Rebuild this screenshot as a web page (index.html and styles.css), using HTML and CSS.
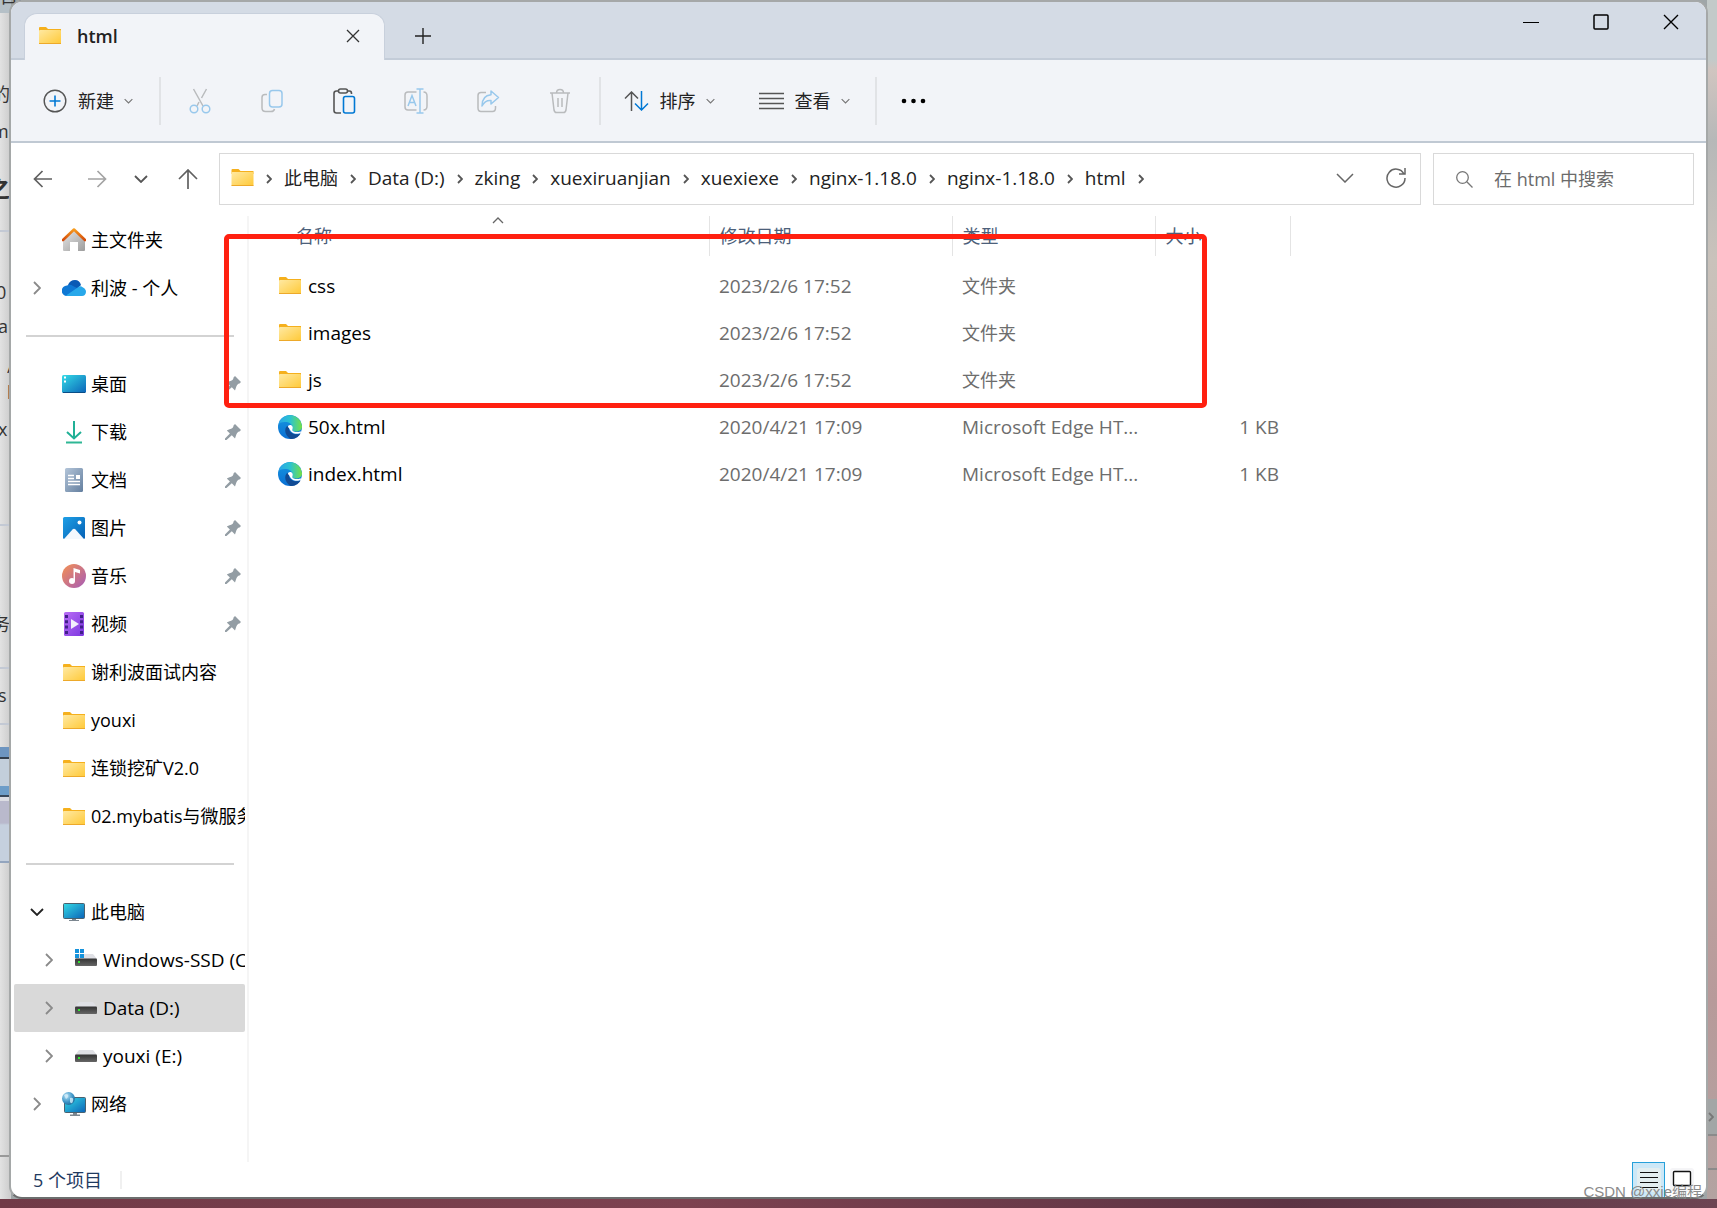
FILE: index.html
```html
<!DOCTYPE html>
<html lang="zh-CN">
<head>
<meta charset="utf-8">
<title>html</title>
<link rel="stylesheet" href="styles.css">
</head>
<body>
<svg class="defs" aria-hidden="true">
  <defs>
    <linearGradient id="gFolder" x1="0" y1="0" x2="1" y2="1"><stop offset="0" stop-color="#ffe9a2"/><stop offset="1" stop-color="#ffc937"/></linearGradient>
    <linearGradient id="gScreen" x1="0" y1="0" x2="1" y2="1"><stop offset="0" stop-color="#34dbe6"/><stop offset="1" stop-color="#0b63b8"/></linearGradient>
    <linearGradient id="gHome" x1="0" y1="0" x2="1" y2="1"><stop offset="0" stop-color="#e6e6e6"/><stop offset="1" stop-color="#9c9c9c"/></linearGradient>
    <linearGradient id="gRoof" x1="0" y1="0" x2="0" y2="1"><stop offset="0" stop-color="#f79a1c"/><stop offset="1" stop-color="#d34a0a"/></linearGradient>
    <linearGradient id="gDoc" x1="0" y1="0" x2="1" y2="1"><stop offset="0" stop-color="#b3c5d9"/><stop offset="1" stop-color="#647f9f"/></linearGradient>
    <linearGradient id="gPic" x1="0" y1="0" x2="1" y2="1"><stop offset="0" stop-color="#1e9fe6"/><stop offset="1" stop-color="#0561b5"/></linearGradient>
    <linearGradient id="gMusic" x1="0" y1="0" x2="1" y2="1"><stop offset="0" stop-color="#f59152"/><stop offset="1" stop-color="#a55bb8"/></linearGradient>
    <linearGradient id="gVideo" x1="0" y1="0" x2="1" y2="1"><stop offset="0" stop-color="#b96df5"/><stop offset="1" stop-color="#7c37e0"/></linearGradient>
    <linearGradient id="gDisk" x1="0" y1="0" x2="0" y2="1"><stop offset="0" stop-color="#333"/><stop offset="1" stop-color="#666"/></linearGradient>
    <linearGradient id="gEdgeA" x1="0" y1="0" x2="1" y2="0"><stop offset="0" stop-color="#2aa5ea"/><stop offset=".5" stop-color="#2cc3cf"/><stop offset="1" stop-color="#74e046"/></linearGradient>
    <linearGradient id="gEdgeB" x1="0" y1="0" x2="0" y2="1"><stop offset="0" stop-color="#1697e0"/><stop offset="1" stop-color="#0a6fd3"/></linearGradient>
    <radialGradient id="gGlobe" cx=".35" cy=".3" r=".8"><stop offset="0" stop-color="#b7e2f5"/><stop offset=".6" stop-color="#3b93c6"/><stop offset="1" stop-color="#1f6390"/></radialGradient>
  </defs>
  <symbol id="folder" viewBox="0 0 22 17"><path d="M0 1Q0 0 1 0H7L9 2H22V5H0z" fill="#f5b01d"/><rect y="3" width="22" height="14" rx="1" fill="url(#gFolder)"/><path d="M0 16.5H22" stroke="#eda92a"/></symbol>
  <symbol id="edge" viewBox="0 0 24 24"><circle cx="12" cy="12" r="12" fill="url(#gEdgeB)"/><path d="M.5 9A12 12 0 0 1 24 11C24.300 14.500 21.500 16.500 18 16.500C15 16.500 14 15.500 14.600 14C15.500 11.500 13 7.500 8.500 7C5 6.600 2 7.300 .5 9z" fill="url(#gEdgeA)"/><path d="M8.500 11.500C5.500 15.500 8 21 12.500 24C17.500 24.300 21 21.500 22.500 18.500C19.500 20 15.500 19.500 13 17.500C11 15.800 10.600 13.500 11.500 11z" fill="#114b94"/><path d="M14.500 11.500C13 9 9.800 9.800 10 12C11.800 13.500 12 16.500 15.500 18.200C18.500 19.300 21.500 18.800 23 17.500C23.300 16.700 23 16.300 22.400 16.400C19 17.300 13.500 17.500 14.500 14C14.800 13.200 14.900 12.500 14.500 11.500z" fill="#fff"/></symbol>
  <symbol id="chev" viewBox="0 0 8 14"><path d="M1 1L7 7L1 13" fill="none" stroke="currentColor" stroke-width="1.800"/></symbol>
  <symbol id="crumb" viewBox="0 0 6 10"><path d="M1 1L5 5L1 9" fill="none" stroke="currentColor" stroke-width="1.800"/></symbol>
  <symbol id="down" viewBox="0 0 14 8"><path d="M1 1L7 7L13 1" fill="none" stroke="currentColor" stroke-width="1.800"/></symbol>
  <symbol id="pin" viewBox="0 0 16 16"><path d="M10 0L16 6L14.500 7.500C13 7.500 11.500 9.500 11 11.500L10 14.500L6.800 11.300L1.500 16L0 16V14.500L4.900 9.400L1.800 6.500L4.500 5.300C7 5 8.500 3.500 8.500 1.500z" fill="#939da4"/></symbol>
  <symbol id="disk" viewBox="0 0 22 12"><path d="M4 0H18L22 5H0z" fill="#dfe0e5"/><rect y="4.500" width="22" height="7.500" rx="1" fill="url(#gDisk)"/><rect x="3" y="7" width="2" height="2" fill="#2ee62e"/></symbol>
  <symbol id="pc" viewBox="0 0 22 18"><rect x=".5" y=".5" width="21" height="15" rx="1" fill="url(#gScreen)" stroke="#49616f"/><path d="M9 16H13V17H16V18H6V17H9z" fill="#7c8790"/></symbol>
</svg>

<div class="desktop" aria-hidden="true">
  <p class="scrap scrap-top">目的需要网站自的心..CJUsers/Cssimages、制制nginx目录</p>
  <p class="scrap s1">的</p>
  <p class="scrap s2">m</p>
  <p class="scrap s3">之</p>
  <p class="scrap s4">0</p>
  <p class="scrap s5">ar</p>
  <p class="scrap s6">/</p>
  <p class="scrap s7">l</p>
  <p class="scrap s8">x</p>
  <p class="scrap s9">务</p>
  <p class="scrap s10">s</p>
  <span class="scroll-end"><svg width="6" height="10"><use href="#crumb"/></svg></span>
</div>

<div class="window">
  <header class="titlebar">
    <div class="tab">
      <svg width="22" height="17"><use href="#folder"/></svg>
      <span class="tab-name">html</span>
      <button class="plain" aria-label="关闭标签页"><svg width="14" height="14" viewBox="0 0 14 14"><path d="M1 1L13 13M13 1L1 13" stroke="#333" stroke-width="1.300"/></svg></button>
    </div>
    <button class="plain new-tab" aria-label="新标签页"><svg width="16" height="16" viewBox="0 0 16 16"><path d="M8 0V16M0 8H16" stroke="#222" stroke-width="1.400"/></svg></button>
    <div class="win-controls">
      <button class="plain" aria-label="最小化"><svg width="16" height="16"><path d="M0 8.500H16" stroke="#000"/></svg></button>
      <button class="plain" aria-label="最大化"><svg width="16" height="16"><rect x="1" y="1" width="14" height="14" rx="1" fill="none" stroke="#000" stroke-width="1.500"/></svg></button>
      <button class="plain" aria-label="关闭"><svg width="16" height="16"><path d="M1 1L15 15M15 1L1 15" stroke="#000" stroke-width="1.400"/></svg></button>
    </div>
  </header>

  <div class="toolbar">
    <button class="tool new"><svg width="24" height="24" viewBox="0 0 24 24" fill="none"><circle cx="12" cy="12" r="10.800" stroke="#555" stroke-width="1.400"/><path d="M12 6.500V17.500M6.500 12H17.500" stroke="#0078d4" stroke-width="1.600"/></svg>新建<svg class="dd" width="9" height="6"><use href="#down"/></svg></button>
    <span class="sep"></span>
    <div class="icons">
      <button class="plain" aria-label="剪切"><svg width="24" height="26" viewBox="0 0 24 26" fill="none" stroke-width="1.500"><path d="M5.500 1L15 18M18.500 1L13.500 10M11 14L9 18" stroke="#b9bbbd"/><circle cx="6" cy="21" r="3.800" stroke="#98c8ec"/><circle cx="18" cy="21" r="3.800" stroke="#98c8ec"/></svg></button>
      <button class="plain" aria-label="复制"><svg width="24" height="26" viewBox="0 0 24 26" fill="none" stroke-width="1.500"><path d="M7 6.500H5Q2 6.500 2 9.500V20Q2 23.500 5.500 23.500H11Q14 23.500 14.500 21" stroke="#b9bbbd"/><rect x="9.500" y="2.500" width="12.500" height="16.500" rx="3" stroke="#98c8ec"/></svg></button>
      <button class="plain" aria-label="粘贴"><svg width="24" height="26" viewBox="0 0 24 26" fill="none" stroke-width="1.600"><path d="M9 25H4.500Q2 25 2 22.500V5.500Q2 3 4.500 3H6.500M15.500 3H17.500Q19.500 3 19.500 5.500V6" stroke="#555"/><rect x="6.500" y="1" width="9" height="4" rx="2" stroke="#555"/><rect x="11.500" y="8.500" width="11" height="16.500" rx="2" stroke="#0078d4"/></svg></button>
      <button class="plain" aria-label="重命名"><svg width="24" height="26" viewBox="0 0 24 26" fill="none" stroke-width="1.500"><path d="M12.500 4H4Q1 4 1 7V19Q1 22 4 22H12.500M19.500 4Q23 4 23 8V18Q23 22 19.500 22" stroke="#b9bbbd"/><path d="M12.500 1H19.500M12.500 25H19.500M16 1V25M4 18L8 7.500L12 18M5.500 14.500H10.500" stroke="#98c8ec"/></svg></button>
      <button class="plain" aria-label="共享"><svg width="24" height="26" viewBox="0 0 24 26" fill="none" stroke-width="1.500"><path d="M10 4.500H5Q2 4.500 2 7.500V20Q2 23.500 5 23.500H16.500Q19.500 23.500 19.500 20V18" stroke="#b9bbbd"/><path d="M15 3L22.500 9.500L15 16V12.500Q9 12 6 18Q6 7.500 15 6.800z" stroke="#98c8ec" stroke-linejoin="round"/></svg></button>
      <button class="plain" aria-label="删除"><svg width="24" height="26" viewBox="0 0 24 26" fill="none" stroke="#b9bbbd" stroke-width="1.500"><path d="M2 5H22M4 5L6 22Q6.500 24.500 8.500 24.500H15.500Q17.500 24.500 18 22L20 5M8.500 5Q8.500 1.500 12 1.500T15.500 5M10 10V19M14 10V19"/></svg></button>
    </div>
    <span class="sep"></span>
    <button class="tool sort"><svg width="25" height="20" viewBox="0 0 25 20" fill="none" stroke-width="1.500"><path d="M7.500 20V1M1 7.500L7.500 1L14 7.500" stroke="#555"/><path d="M17.500 0V19M11 12.500L17.500 19L24 12.500" stroke="#0078d4"/></svg>排序<svg class="dd" width="9" height="6"><use href="#down"/></svg></button>
    <button class="tool view"><svg width="25" height="18"><path d="M0 1.500H25M0 6.500H25M0 11.500H25M0 16.500H25" stroke="#555" stroke-width="1.500"/></svg>查看<svg class="dd" width="9" height="6"><use href="#down"/></svg></button>
    <span class="sep"></span>
    <button class="plain more" aria-label="查看更多"><svg width="25" height="6"><circle cx="3" cy="3" r="2.300"/><circle cx="12.500" cy="3" r="2.300"/><circle cx="22" cy="3" r="2.300"/></svg></button>
  </div>

  <div class="navbar">
    <div class="history">
      <button class="plain back" aria-label="后退"><svg width="20" height="20" viewBox="0 0 20 20" fill="none" stroke="#606060" stroke-width="1.700"><path d="M19 10H2M9.500 2L1.500 10L9.500 18"/></svg></button>
      <button class="plain forward" aria-label="前进"><svg width="20" height="20" viewBox="0 0 20 20" fill="none" stroke="#a3a3a3" stroke-width="1.700"><path d="M1 10H18M10.500 2L18.500 10L10.500 18"/></svg></button>
      <button class="plain recent" aria-label="最近浏览的位置"><svg width="14" height="8"><use href="#down"/></svg></button>
      <button class="plain up" aria-label="上移"><svg width="20" height="20" viewBox="0 0 20 20" fill="none" stroke="#606060" stroke-width="1.700"><path d="M10 20V2M1 10L10 1L19 10"/></svg></button>
    </div>
    <nav class="address" aria-label="地址">
      <svg width="23" height="17"><use href="#folder"/></svg>
      <svg class="arrow" width="6" height="10"><use href="#crumb"/></svg><a href="#" class="cjk">此电脑</a>
      <svg class="arrow" width="6" height="10"><use href="#crumb"/></svg><a href="#">Data (D:)</a>
      <svg class="arrow" width="6" height="10"><use href="#crumb"/></svg><a href="#">zking</a>
      <svg class="arrow" width="6" height="10"><use href="#crumb"/></svg><a href="#">xuexiruanjian</a>
      <svg class="arrow" width="6" height="10"><use href="#crumb"/></svg><a href="#">xuexiexe</a>
      <svg class="arrow" width="6" height="10"><use href="#crumb"/></svg><a href="#">nginx-1.18.0</a>
      <svg class="arrow" width="6" height="10"><use href="#crumb"/></svg><a href="#">nginx-1.18.0</a>
      <svg class="arrow" width="6" height="10"><use href="#crumb"/></svg><a href="#">html</a>
      <svg class="arrow" width="6" height="10"><use href="#crumb"/></svg>
      <div class="address-tools">
        <button class="plain" aria-label="以前的位置"><svg width="18" height="10" viewBox="0 0 18 10" fill="none"><path d="M1 1L9 9L17 1" stroke="#666" stroke-width="1.500"/></svg></button>
        <button class="plain" aria-label="刷新"><svg width="20" height="20" viewBox="0 0 20 20" fill="none" stroke="#666" stroke-width="1.500"><path d="M18 6A9 9 0 1 0 19 10M19 0V6H13"/></svg></button>
      </div>
    </nav>
    <label class="search">
      <svg width="17" height="17" viewBox="0 0 17 17" fill="none" stroke="#777" stroke-width="1.300"><circle cx="6.500" cy="6.500" r="5.800"/><path d="M10.800 10.800L16.500 16.500"/></svg>
      <input type="text" placeholder="在 html 中搜索" aria-label="在 html 中搜索">
    </label>
  </div>

  <div class="body">
    <aside class="sidebar">
      <a href="#" class="item"><span class="exp"></span><svg width="24" height="24" viewBox="0 0 24 24"><path d="M1 12L12 3L23 12V22Q23 23 22 23H16V14H8V23H2Q1 23 1 22z" fill="url(#gHome)"/><path d="M1 12L12 1.500L23 12" fill="none" stroke="url(#gRoof)" stroke-width="2.600" stroke-linecap="round" stroke-linejoin="round"/></svg>主文件夹</a>
      <a href="#" class="item"><span class="exp"><svg width="8" height="14"><use href="#chev"/></svg></span><svg width="24" height="24" viewBox="0 0 24 24"><path d="M6 9Q8 4 13 4Q17.500 4 19 9L13 15z" fill="#0a5ab5"/><path d="M5 20A5 5 0 0 1 5 9.500Q8 8 11 10L17 13L9 20z" fill="#0f78d4"/><path d="M4 19.500L15 12Q18 9 21 11.500Q24 13 24 16Q23.500 20 20 20H5z" fill="#28a8ea"/></svg>利波 - 个人</a>
      <hr>
      <a href="#" class="item"><span class="exp"></span><svg width="24" height="24" viewBox="0 0 24 24"><rect y="3" width="24" height="18" rx="1.500" fill="url(#gScreen)"/><path d="M2 5.500H4M2 9.500H4" stroke="#fff" stroke-width="2"/><path d="M1 20.500H23" stroke="#0a4d86"/></svg>桌面<svg class="pin" width="16" height="16"><use href="#pin"/></svg></a>
      <a href="#" class="item"><span class="exp"></span><svg width="24" height="24" viewBox="0 0 24 24" fill="none"><path d="M12 1V18M5 12L12 18.500L19 12" stroke="#20b096" stroke-width="2"/><path d="M4 22.500H20" stroke="#2fb795" stroke-width="2"/></svg>下载<svg class="pin" width="16" height="16"><use href="#pin"/></svg></a>
      <a href="#" class="item"><span class="exp"></span><svg width="24" height="24" viewBox="0 0 24 24"><rect x="3" width="18" height="24" rx="1.500" fill="url(#gDoc)"/><path d="M6 7.500H12M6 10.500H12M6 13.500H18M6 16.500H18" stroke="#fff" stroke-width="1.300"/><rect x="14" y="7" width="4" height="4" fill="#fff"/></svg>文档<svg class="pin" width="16" height="16"><use href="#pin"/></svg></a>
      <a href="#" class="item"><span class="exp"></span><svg width="24" height="24" viewBox="0 0 24 24"><rect x="1" y="1" width="22" height="22" rx="1.500" fill="url(#gPic)"/><path d="M2 23L10.500 13.500Q12 12 13.500 13.500L22 23z" fill="#f4f8fd"/><circle cx="17.500" cy="6.500" r="2" fill="#fff"/></svg>图片<svg class="pin" width="16" height="16"><use href="#pin"/></svg></a>
      <a href="#" class="item"><span class="exp"></span><svg width="24" height="24" viewBox="0 0 24 24"><circle cx="12" cy="12" r="12" fill="url(#gMusic)"/><circle cx="10" cy="17" r="3" fill="#fff"/><path d="M11.500 17V4L18 6V9.500L13 8V17z" fill="#fff"/></svg>音乐<svg class="pin" width="16" height="16"><use href="#pin"/></svg></a>
      <a href="#" class="item"><span class="exp"></span><svg width="24" height="24" viewBox="0 0 24 24"><rect x="2" width="20" height="24" rx="1.500" fill="url(#gVideo)"/><path d="M4.500 3V22M19.500 3V22" stroke="#41208a" stroke-width="3" stroke-dasharray="3 2.300"/><path d="M9 7L17 12L9 17z" fill="#f2eefc"/></svg>视频<svg class="pin" width="16" height="16"><use href="#pin"/></svg></a>
      <a href="#" class="item"><span class="exp"></span><svg width="24" height="17"><use href="#folder"/></svg>谢利波面试内容</a>
      <a href="#" class="item"><span class="exp"></span><svg width="24" height="17"><use href="#folder"/></svg>youxi</a>
      <a href="#" class="item"><span class="exp"></span><svg width="24" height="17"><use href="#folder"/></svg>连锁挖矿V2.0</a>
      <a href="#" class="item"><span class="exp"></span><svg width="24" height="17"><use href="#folder"/></svg>02.mybatis与微服务</a>
      <hr>
      <a href="#" class="item"><span class="exp open"><svg width="14" height="8"><use href="#down"/></svg></span><svg width="24" height="18"><use href="#pc"/></svg>此电脑</a>
      <a href="#" class="item sub"><span class="exp"><svg width="8" height="14"><use href="#chev"/></svg></span><svg width="22" height="22" viewBox="0 0 22 22"><path d="M4 5H18L22 10H0z" fill="#dfe0e5"/><rect y="9.500" width="22" height="7.500" rx="1" fill="url(#gDisk)"/><rect x="3" y="12" width="2" height="2" fill="#2ee62e"/><path d="M0 0H4V4H0zM5 0H9V4H5zM0 5H4V9H0zM5 5H9V9H5z" fill="#1593dc"/></svg>Windows-SSD (C:)</a>
      <a href="#" class="item sub active"><span class="exp"><svg width="8" height="14"><use href="#chev"/></svg></span><svg width="22" height="12"><use href="#disk"/></svg>Data (D:)</a>
      <a href="#" class="item sub"><span class="exp"><svg width="8" height="14"><use href="#chev"/></svg></span><svg width="22" height="12"><use href="#disk"/></svg>youxi (E:)</a>
      <a href="#" class="item"><span class="exp"><svg width="8" height="14"><use href="#chev"/></svg></span><svg width="24" height="24" viewBox="0 0 24 24"><rect x="2.500" y="5.500" width="21" height="15" rx="1" fill="url(#gScreen)" stroke="#49616f"/><path d="M11 21H15V22.500H18V24H8V22.500H11z" fill="#7c8790"/><circle cx="6.500" cy="6.500" r="6.500" fill="url(#gGlobe)"/><path d="M2 3Q5 1 6 3T4 7zM8 6Q12 5 11 9T8 10z" fill="#d5eefa" opacity=".8"/></svg>网络</a>
    </aside>

    <main class="files">
      <table>
        <colgroup><col class="c-name"><col class="c-date"><col class="c-type"><col class="c-size"></colgroup>
        <thead><tr><th>名称<svg class="caret" width="12" height="7" viewBox="0 0 12 7" fill="none"><path d="M1 6L6 1L11 6" stroke="#666" stroke-width="1.300"/></svg></th><th>修改日期</th><th>类型</th><th>大小</th></tr></thead>
        <tbody>
          <tr><td><span class="name"><svg width="24" height="17"><use href="#folder"/></svg>css</span></td><td>2023/2/6 17:52</td><td class="cjk">文件夹</td><td></td></tr>
          <tr><td><span class="name"><svg width="24" height="17"><use href="#folder"/></svg>images</span></td><td>2023/2/6 17:52</td><td class="cjk">文件夹</td><td></td></tr>
          <tr><td><span class="name"><svg width="24" height="17"><use href="#folder"/></svg>js</span></td><td>2023/2/6 17:52</td><td class="cjk">文件夹</td><td></td></tr>
          <tr><td><span class="name"><svg width="24" height="24"><use href="#edge"/></svg>50x.html</span></td><td>2020/4/21 17:09</td><td>Microsoft Edge HT...</td><td>1 KB</td></tr>
          <tr><td><span class="name"><svg width="24" height="24"><use href="#edge"/></svg>index.html</span></td><td>2020/4/21 17:09</td><td>Microsoft Edge HT...</td><td>1 KB</td></tr>
        </tbody>
      </table>
      <div class="highlight" aria-hidden="true"></div>
    </main>
  </div>

  <footer class="status">
    <span class="count">5 个项目</span>
    <div class="view-modes">
      <button class="plain details" aria-label="详细信息"><svg width="24" height="24" viewBox="0 0 24 24"><rect width="24" height="24" rx="3" fill="#e3eef0"/><path d="M3 4.500H21M3 9.500H21M3 14.500H21M3 19.500H21" stroke="#111"/></svg></button>
      <button class="plain" aria-label="大图标"><svg width="24" height="24" viewBox="0 0 24 24"><rect width="24" height="24" rx="3" fill="#f5f5f7"/><rect x="3.500" y="3.500" width="17" height="14" rx="1" fill="#fff" stroke="#111" stroke-width="1.400"/></svg></button>
    </div>
  </footer>
</div>
<p class="watermark">CSDN @xxie编程</p>
</body>
</html>
```

FILE: styles.css
```css
* { box-sizing: border-box; }
body {
  margin: 0;
  min-height: 100vh;
  padding: 0 9px 9px;
  display: flex;
  flex-direction: column;
  position: relative;
  font: 18px/24px "Open Sans", "Noto Sans CJK SC", sans-serif;
  color: #111;
  background: linear-gradient(90deg, #713a47, #7d4250 40%, #5d3444 75%, #6d4452);
}
p { margin: 0; }
a { color: inherit; text-decoration: none; }
svg { flex: none; display: block; }
.defs { position: absolute; width: 0; height: 0; }
.plain, .tool {
  border: 0;
  padding: 0;
  background: none;
  font: inherit;
  color: inherit;
  display: flex;
  align-items: center;
  justify-content: center;
}

/* desktop behind the window */
.desktop {
  position: absolute;
  inset: 0 0 9px;
  overflow: hidden;
  background:
    linear-gradient(#999, #999) 0 1155px / 11px 2px no-repeat,
    linear-gradient(#6d95c0 0 10px, #333f4d 10px 12px, #c3cfdb 12px 39px, #6d9dc8 39px 48px, #39485a 48px 50px, #dcdde3 50px 54px, #b9b9cc 54px 76px, #c5d0de 78px 114px, #93a5be 114px 116px) 0 747px / 11px 116px no-repeat,
    linear-gradient(#c3c9d4, #c3c9d4) 0 723px / 11px 2px no-repeat,
    linear-gradient(#c3c9d4, #c3c9d4) 0 667px / 11px 2px no-repeat,
    linear-gradient(#c3c9d4, #c3c9d4) 0 524px / 11px 2px no-repeat,
    linear-gradient(#c3c9d4, #c3c9d4) 0 230px / 11px 2px no-repeat,
    linear-gradient(#b5c0c7, #b5c0c7) 0 0 / 11px 13px no-repeat,
    linear-gradient(90deg, #e2e2e2, #cbcbcb) 0 0 / 11px 100% no-repeat,
    linear-gradient(#8b8b8b, #8b8b8b) right 1168px / 10px 2px no-repeat,
    linear-gradient(#8b8b8b, #8b8b8b) right 1134px / 10px 2px no-repeat,
    linear-gradient(#a2a6a6, #a2a6a6) right 1099px / 10px 35px no-repeat,
    linear-gradient(#c3cac9 0, #c3cac9 60px, #d0c5c0 70px, #b6b8b8 140px, #c9c2bb 260px, #c8b2ac 600px, #b79a9a 1000px, #b3a3a1 1200px) right 0 / 10px 100% no-repeat,
    #9fa6a8;
}
.scrap { position: absolute; left: -8px; width: 20px; overflow: hidden; white-space: nowrap; line-height: 24px; color: #333; }
.scrap-top { left: 0; width: 600px; top: -16px; }
.s1 { top: 82px; }
.s2 { top: 119px; }
.s3 { top: 176px; font-weight: 700; font-size: 24px; left: -14px; width: 26px; }
.s4 { top: 280px; left: -4px; }
.s5 { top: 314px; left: -2px; width: 13px; }
.s6 { top: 354px; left: 7px; width: 4px; }
.s7 { top: 380px; left: 7px; width: 4px; }
.s8 { top: 417px; left: -2px; width: 13px; }
.s9 { top: 612px; }
.s10 { top: 683px; left: -2px; width: 13px; }
.scroll-end { position: absolute; right: 3px; top: 1112px; color: #777; }

.window {
  flex: 1;
  position: relative;
  display: flex;
  flex-direction: column;
  overflow: hidden;
  border: 2px solid #a5a8a8;
  border-bottom-color: #6c6e6e;
  border-radius: 13px;
  background: #fff;
}

/* title bar */
.titlebar { display: flex; height: 58px; background: #d4dbe5; border-bottom: 2px solid #c3ccd8; }
.tab {
  width: 361px;
  height: 47px;
  margin: 11px 0 0 13px;
  padding: 0 24px 3px 14px;
  display: flex;
  align-items: center;
  gap: 16px;
  border: 1px solid #c8d0dc;
  border-bottom: 0;
  border-radius: 13px 13px 0 0;
  background: #f2f4f8;
}
.tab-name { flex: 1; font-weight: 600; line-height: 26px; color: #222; }
.new-tab { align-self: flex-start; margin: 26px 0 0 30px; }
.win-controls { margin: 12px 27px 0 auto; display: flex; align-items: flex-start; gap: 54px; }

/* command bar */
.toolbar { display: flex; align-items: center; height: 83px; background: #f2f4f8; border-bottom: 2px solid #c0c9d3; }
.tool { color: #222; gap: 11px; }
.tool .dd { margin-left: -1px; color: #777; }
.new { width: 148px; padding-left: 32px; justify-content: flex-start; }
.sep { width: 2px; height: 48px; background: #e1e3e6; }
.icons { width: 438px; padding: 0 27px; display: flex; justify-content: space-between; }
.sort { width: 136px; }
.view { width: 138px; padding-right: 4px; }
.more { margin-left: 24px; }

/* navigation row */
.navbar { display: flex; height: 73px; padding: 10px 12px 11px 5px; gap: 12px; }
.history { width: 191px; display: flex; align-items: stretch; color: #555; }
.back, .forward { width: 54px; }
.recent { width: 34px; }
.up { padding-left: 20px; }
.address { flex: 1; display: flex; align-items: center; padding: 0 14px 3px 11px; border: 1px solid #d9d9d9; font-size: 19px; color: #222; }
.cjk { font-size: 18px; }
.arrow { margin: 2px 12px 0; color: #555; }
.address-tools { margin-left: auto; display: flex; align-items: center; gap: 32px; }
.search { width: 261px; display: flex; align-items: center; padding: 0 15px 0 22px; gap: 21px; border: 1px solid #d9d9d9; }
.search input { flex: 1; min-width: 0; border: 0; padding: 0; outline: 0; background: none; font: inherit; line-height: 24px; }
.search input::placeholder { color: #6b6b6b; opacity: 1; }

/* sidebar */
.body { flex: 1; display: flex; }
.sidebar { width: 238px; padding-left: 3px; border-right: 2px solid #f5f5f5; }
.item { height: 48px; display: flex; align-items: center; gap: 5px; width: 231px; padding-left: 11px; overflow: hidden; white-space: nowrap; color: #000; border-radius: 2px; }
.exp { flex: none; width: 24px; margin-right: 8px; display: flex; justify-content: center; color: #8a8a8a; }
.open { color: #222; }
.pin { margin: 0 4px 0 auto; }
.sub { padding-left: 23px; gap: 6px; font-size: 19px; }
.active { background: #d9d9d9; }
hr { height: 2px; margin: 23px 13px 23px 12px; border: 0; background: #d3d3d3; }

/* file list */
.files { flex: 1; position: relative; }
table { width: 1041px; border-collapse: collapse; table-layout: fixed; font-size: 19px; color: #6d6d6d; }
.c-name { width: 460px; }
.c-date { width: 243px; }
.c-type { width: 203px; }
.c-size { width: 135px; }
th { position: relative; height: 40px; padding: 0 10px; border-right: 1px solid #e4e4e4; font-size: 18px; font-weight: 400; text-align: left; color: #4c607a; }
th:first-child { padding-left: 47px; }
.caret { position: absolute; left: 243px; top: 1px; }
td { height: 47px; padding: 0 10px; white-space: nowrap; }
td:first-child { padding-left: 29px; color: #000; }
td:last-child { text-align: right; padding-right: 11px; }
tbody::before { content: ""; display: block; height: 6px; }
.name { display: flex; align-items: center; gap: 6px; }
.highlight { position: absolute; left: -25px; top: 18px; width: 983px; height: 174px; border: 5px solid #ff2010; border-radius: 5px; }

/* status bar */
.status { height: 35px; padding: 0 12px 0 22px; display: flex; align-items: center; color: #1f3a5f; }
.count { padding-right: 18px; line-height: 18px; border-right: 2px solid #f0f0f0; }
.view-modes { margin-left: auto; align-self: stretch; display: flex; align-items: center; gap: 5px; }
.details { width: 33px; align-self: stretch; background: #cce8f7; border: 1px solid #26a0da; border-bottom: 0; }
.watermark { position: absolute; right: 15px; bottom: 4px; font: 15px/24px "Liberation Sans", "Noto Sans CJK SC", sans-serif; color: #8b8b8b; }
```
